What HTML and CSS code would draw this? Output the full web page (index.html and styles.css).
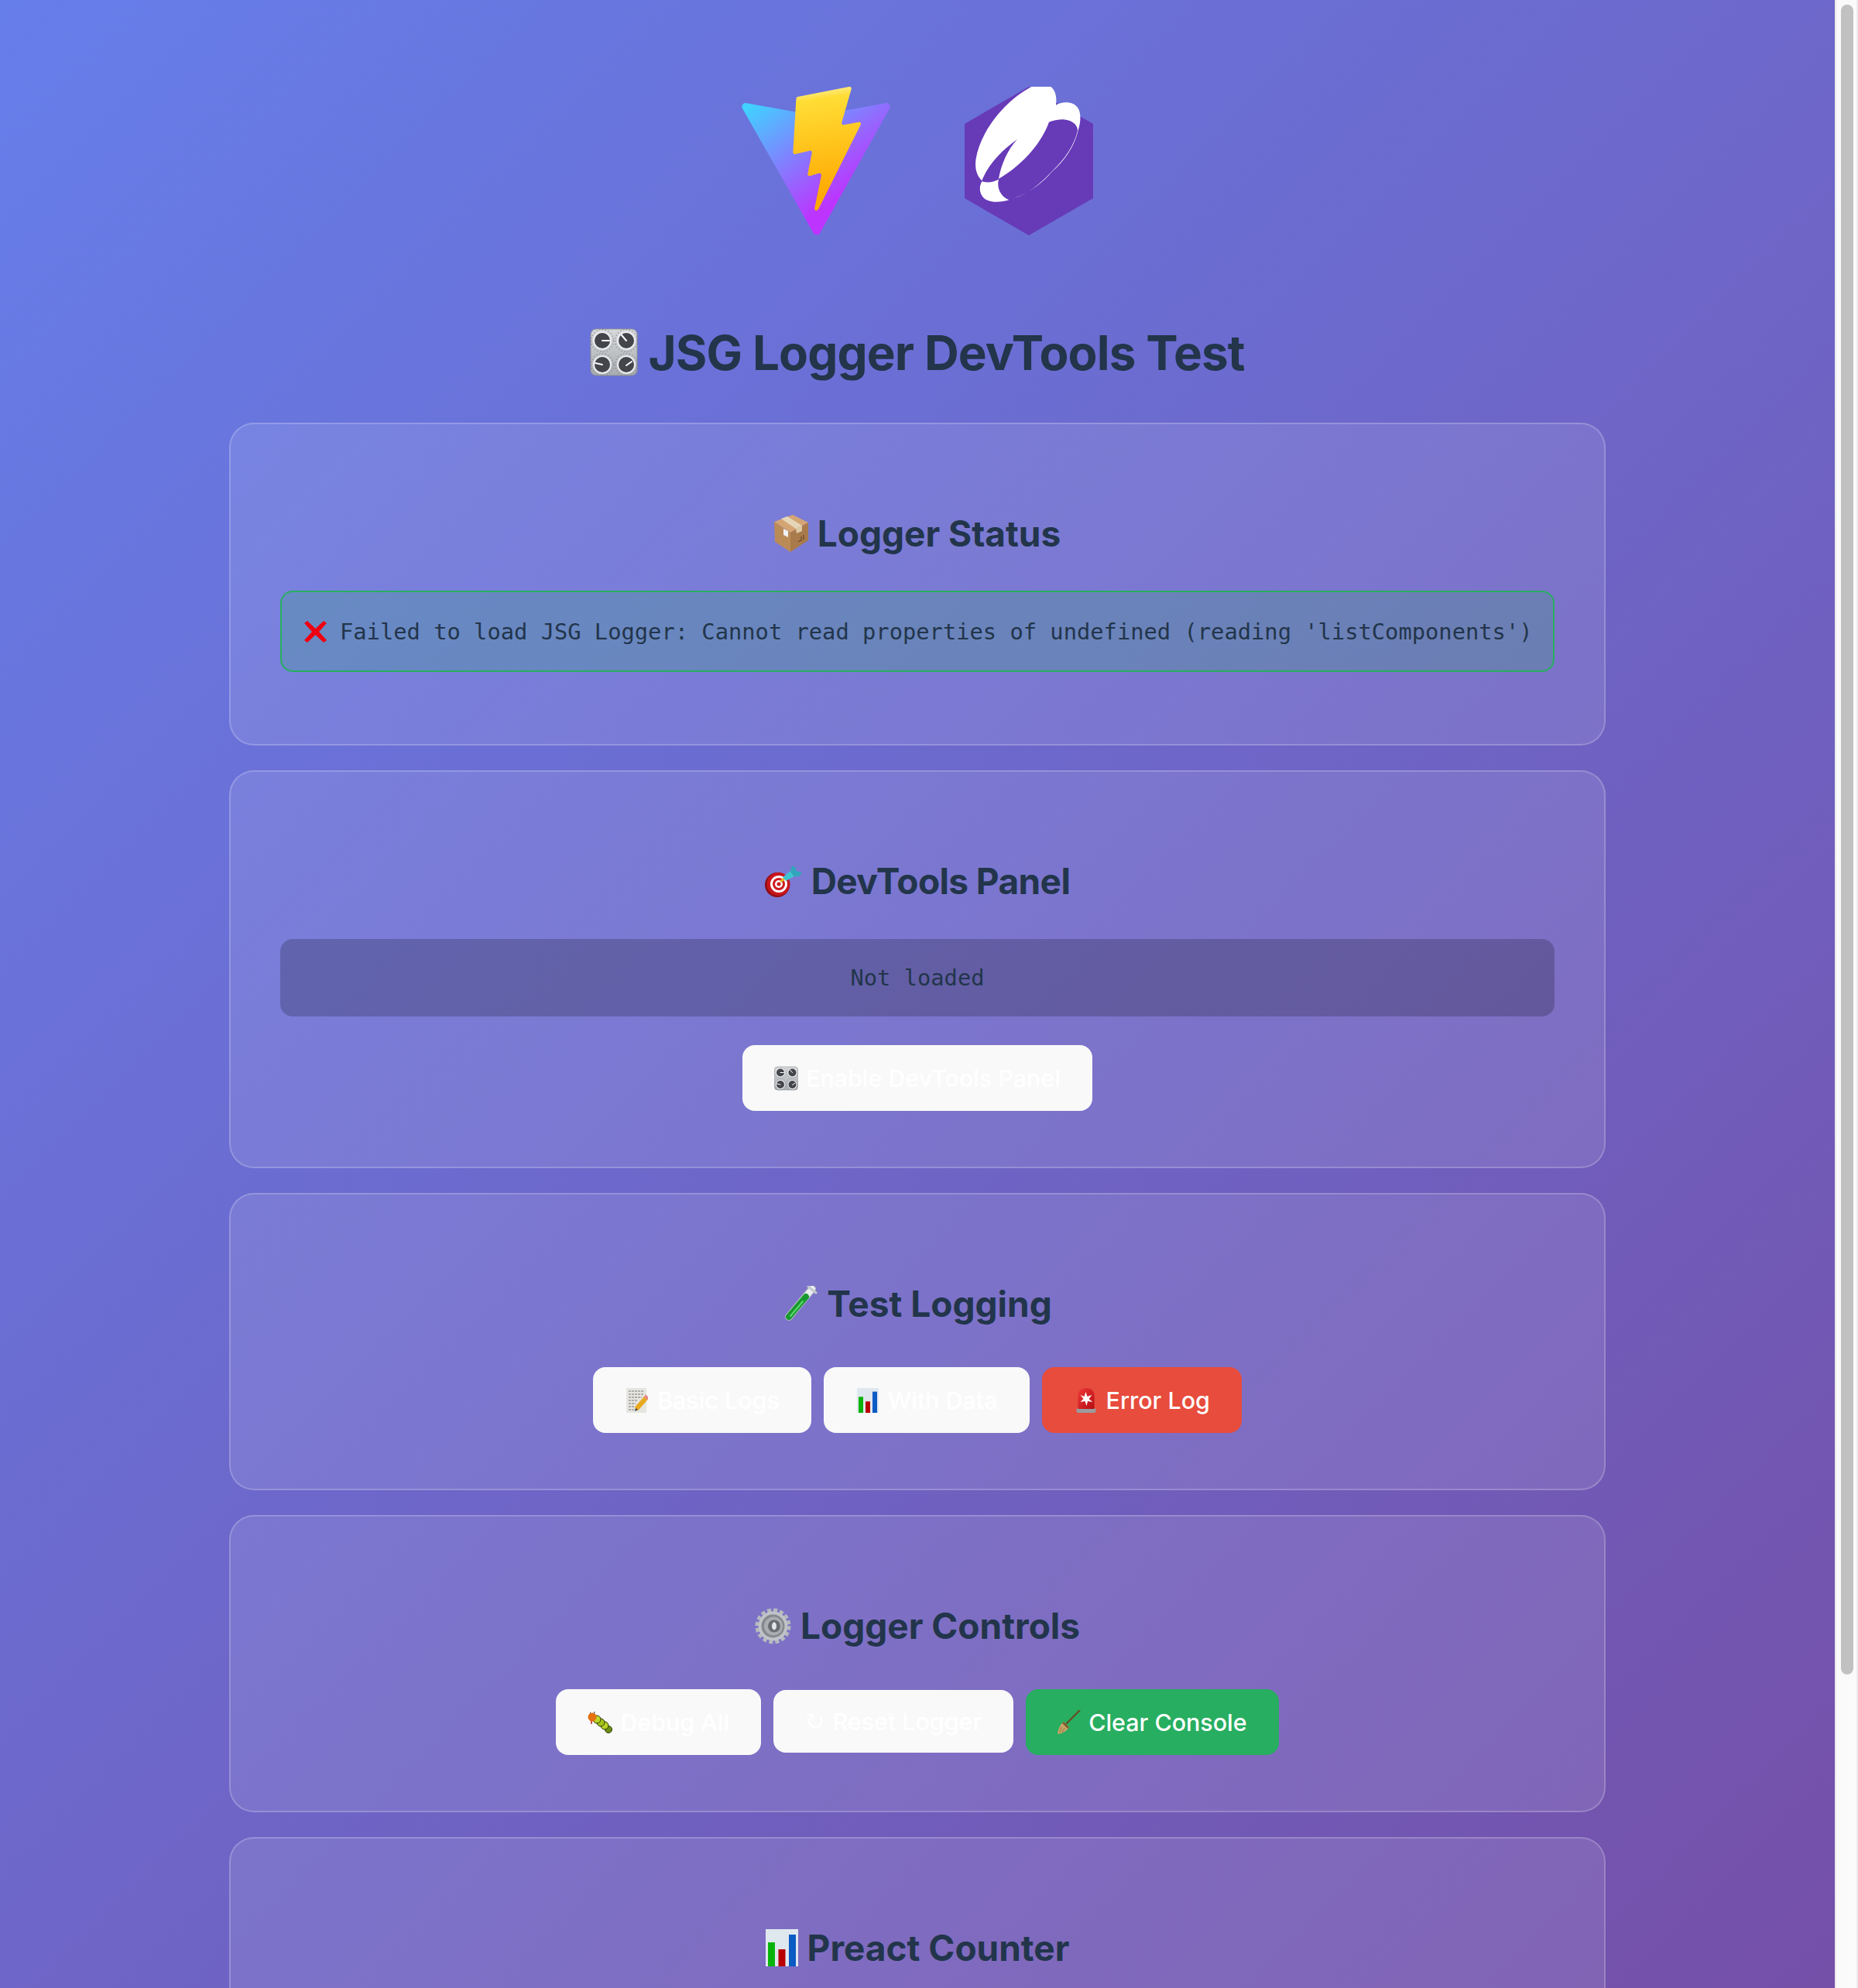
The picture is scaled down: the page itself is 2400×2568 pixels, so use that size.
FILE: index.html
```html
<!DOCTYPE html>
<html lang="en">
<head>
<meta charset="utf-8">
<title>JSG Logger DevTools Test</title>
<link rel="stylesheet" href="styles.css">
</head>
<body>
<svg class="defs" aria-hidden="true">
  <defs>
    <linearGradient id="viteA" x1="-.828%" x2="57.636%" y1="7.652%" y2="78.411%"><stop offset="0" stop-color="#41D1FF"/><stop offset="1" stop-color="#BD34FE"/></linearGradient>
    <linearGradient id="viteB" x1="43.376%" x2="50.316%" y1="2.242%" y2="89.03%"><stop offset="0" stop-color="#FFEA83"/><stop offset=".0833" stop-color="#FFDD35"/><stop offset="1" stop-color="#FFA800"/></linearGradient>
    <linearGradient id="plate" x1="0" y1="0" x2="0" y2="1"><stop offset="0" stop-color="#d6d8da"/><stop offset="1" stop-color="#a8acb0"/></linearGradient>
    <linearGradient id="glass" x1="0" y1="0" x2="1" y2="1"><stop offset="0" stop-color="#f0383a"/><stop offset="1" stop-color="#b30d12"/></linearGradient>
    <symbol id="i-knobs" viewBox="0 0 62 62">
      <rect x="1" y="1" width="60" height="60" rx="7" fill="url(#plate)" stroke="#8b8f93"/>
      <g fill="#eceef0"><circle cx="16" cy="16" r="12"/><circle cx="47" cy="16" r="12"/><circle cx="16" cy="47" r="12"/><circle cx="47" cy="47" r="12"/></g>
      <g fill="#43454b"><circle cx="16" cy="16" r="10"/><circle cx="47" cy="16" r="10"/><circle cx="16" cy="47" r="10"/><circle cx="47" cy="47" r="10"/></g>
      <g stroke="#fff" stroke-width="2" stroke-linecap="round"><path d="M16 16h9"/><path d="M41 9l6 7"/><path d="M7 45l9 2"/><path d="M47 48l7-5"/></g>
      <g fill="none" stroke="#74777b" stroke-width="1.2" stroke-dasharray="1 3"><circle cx="16" cy="16" r="14.5"/><circle cx="47" cy="16" r="14.5"/><circle cx="16" cy="47" r="14.5"/><circle cx="47" cy="47" r="14.5"/></g>
    </symbol>
    <symbol id="i-box" viewBox="0 0 44 48">
      <path d="M0 9 24 0 44 10 21 23z" fill="#d4a473"/>
      <path d="M0 9 21 23V48L1 35z" fill="#bb8b57"/>
      <path d="M21 23 44 10V33L21 48z" fill="#a97a4a"/>
      <path d="M9 5 17 2 36 14 28 18z" fill="#e6d6b8"/>
      <path d="M28 18 36 14V21L29 24z" fill="#dcc9a6"/>
      <path d="M12 18 18 21V29L12 26z" fill="#eef0f2"/>
      <path d="M31 35l3-2M35 28v6M38 26v6" stroke="#6e4c2b" stroke-width="1.3" fill="none"/>
    </symbol>
    <symbol id="i-x" viewBox="0 0 29 28">
      <path d="M0 3 4 0 14.500 10 25 0 29 3 19 14 29 25 25 28 14.500 18 4 28 0 25 10 14z" fill="#ee0010"/>
    </symbol>
    <symbol id="i-target" viewBox="0 0 48 41">
      <circle cx="16" cy="25" r="16" fill="#8f0d12"/>
      <circle cx="17.500" cy="24" r="15" fill="#c8161c"/>
      <circle cx="18" cy="24" r="11" fill="#fff"/>
      <circle cx="18" cy="24" r="8" fill="#cf1a20"/>
      <circle cx="18" cy="24" r="5" fill="#fff"/>
      <circle cx="18" cy="24" r="2.500" fill="#cf1a20"/>
      <path d="M20 21l5-4" stroke="#e6b422" stroke-width="3"/>
      <path d="M23 15 33 7 38 14 27 20z" fill="#3fc4d2"/>
      <path d="M33 8 35 0 40 3 40 7 48 9 44 14 38 14z" fill="#2fa6ba"/>
    </symbol>
    <symbol id="i-tube" viewBox="0 0 45 47">
      <path d="M38 4 8 40" stroke="#aab2b8" stroke-width="10" stroke-linecap="round"/>
      <path d="M38 4 8 40" stroke="#e9eef0" stroke-width="8" stroke-linecap="round"/>
      <path d="M30 14 8 40" stroke="#16992f" stroke-width="8" stroke-linecap="round"/>
      <path d="M26 20 10 39" stroke="#5fd86d" stroke-width="2" stroke-linecap="round"/>
      <path d="M33 1 43 9" stroke="#c3c9ce" stroke-width="3" stroke-linecap="round"/>
    </symbol>
    <symbol id="i-memo" viewBox="0 0 28 32">
      <rect width="26" height="32" fill="#e6e5e0"/>
      <path d="M3 4h19M3 8h19M3 12h17M3 16h12M3 20h9M3 24h7M3 28h7" stroke="#77787a" stroke-width="1.2" stroke-dasharray="3 1"/>
      <path d="M27 11 13 27" stroke="#e8a91e" stroke-width="6"/>
      <path d="M27.500 10.500 25 13.500" stroke="#e58a8a" stroke-width="6"/>
      <path d="M11 30l1-4 3 2z" fill="#3a3a3a"/>
    </symbol>
    <symbol id="i-chart" viewBox="0 0 42 48">
      <rect width="42" height="48" fill="#dfe8ef"/>
      <rect x="3" y="17" width="9" height="31" fill="#08b40c"/>
      <rect x="16.500" y="26" width="9" height="22" fill="#b90000"/>
      <rect x="30" y="7" width="9" height="41" fill="#0a5bc4"/>
    </symbol>
    <symbol id="i-alarm" viewBox="0 0 27 32">
      <rect x="1" y="26" width="25" height="6" rx="2" fill="#9a9c9e"/>
      <path d="M3 27V10C3 3 8 0 13.500 0S24 3 24 10V27z" fill="url(#glass)"/>
      <path d="M13 5 15 11 21 9 17 14 22 18 15.500 17 14 23 12 17 6 18 10 14 6 9 11 11z" fill="#fff"/>
    </symbol>
    <symbol id="i-gear" viewBox="0 0 47 47">
      <circle cx="23.500" cy="23.500" r="20.500" fill="none" stroke="#b6babe" stroke-width="5" stroke-dasharray="5 3.050"/>
      <circle cx="23.500" cy="23.500" r="19" fill="#bfc3c7"/>
      <circle cx="23.500" cy="23.500" r="15" fill="#85888c"/>
      <circle cx="24" cy="23.500" r="12" fill="#a9adb1"/>
      <circle cx="25" cy="23.500" r="8" fill="#6a6d71"/>
      <ellipse cx="25" cy="23.500" rx="3" ry="5" fill="#e3e6e8"/>
    </symbol>
    <symbol id="i-bug" viewBox="0 0 32 28">
      <path d="M3 1 6 4M9 0 8 4" stroke="#222" stroke-width="1"/>
      <circle cx="27" cy="23" r="4.500" fill="#6d8f14" stroke="#2c3a08"/>
      <circle cx="22" cy="18" r="5" fill="#b7d224" stroke="#2c3a08"/>
      <circle cx="17" cy="14" r="5" fill="#a3c21c" stroke="#2c3a08"/>
      <circle cx="12" cy="10" r="5" fill="#bfd628" stroke="#2c3a08"/>
      <circle cx="6" cy="7" r="5.500" fill="#e5710f"/>
      <path d="M5 12v4" stroke="#b5261a" stroke-width="1.500"/>
    </symbol>
    <symbol id="i-broom" viewBox="0 0 30 31">
      <path d="M29 0 11 18" stroke="#6b4423" stroke-width="2"/>
      <path d="M8 15 15 22C12 27 7 30 0 31 1 24 3 19 8 15z" fill="#c8a468"/>
      <path d="M7 16 14 23" stroke="#7b5a2c" stroke-width="2.500"/>
      <path d="M5 22 3 29M9 23 6 29" stroke="#96773f" stroke-width="1"/>
    </symbol>
  </defs>
</svg>
<main class="page">
  <div class="logos">
    <svg class="logo logo-vite" viewBox="0 0 256 257" role="img" aria-label="Vite logo">
      <path fill="url(#viteA)" d="M255.153 37.938L134.897 252.976c-2.483 4.44-8.862 4.466-11.382.048L.875 37.958c-2.746-4.814 1.371-10.646 6.827-9.67l120.385 21.517a6.537 6.537 0 0 0 2.322-.004l117.867-21.483c5.438-.991 9.574 4.796 6.877 9.62Z"/>
      <path fill="url(#viteB)" d="M185.432.063L96.44 17.501a3.268 3.268 0 0 0-2.634 3.014l-5.474 92.456a3.268 3.268 0 0 0 3.997 3.378l24.777-5.718c2.318-.535 4.413 1.507 3.936 3.838l-7.361 36.047c-.495 2.426 1.782 4.5 4.151 3.78l15.304-4.649c2.372-.72 4.652 1.36 4.15 3.788l-11.698 56.621c-.732 3.542 3.979 5.473 5.943 2.437l1.313-2.028l72.516-144.72c1.215-2.423-.88-5.186-3.54-4.672l-25.505 4.922c-2.396.462-4.435-1.77-3.759-4.114l16.646-57.705c.677-2.35-1.37-4.583-3.769-4.113Z"/>
    </svg>
    <svg class="logo logo-preact" viewBox="18 21 498 576" role="img" aria-label="Preact logo">
      <path fill="#673AB8" d="M267 21 516 165V453L267 597 18 453V165z"/>
      <path fill="#fff" d="M278 21H352C370 35 376 60 372 92C395 78 440 75 458 105C470 125 468 160 458 190C445 250 405 310 355 352C320 395 260 440 190 459C250 445 310 400 355 350C405 305 445 245 456 190C455 165 430 150 400 148C380 148 360 152 345 158C320 230 250 320 150 378C160 320 185 265 222 225C165 265 110 320 85 385C70 370 55 345 62 300C80 190 180 70 278 21Z"/>
      <path fill="#fff" d="M85 388C110 395 130 390 150 380C142 410 155 445 190 460C160 470 120 470 100 458C78 445 70 415 85 388Z"/>
    </svg>
  </div>
  <h1 class="title"><svg class="icon icon-title"><use href="#i-knobs"/></svg><span>JSG Logger DevTools Test</span></h1>

  <section class="card">
    <h2 class="heading"><svg class="icon icon-box"><use href="#i-box"/></svg><span>Logger Status</span></h2>
    <div class="status"><svg class="icon icon-x"><use href="#i-x"/></svg><span>Failed to load JSG Logger: Cannot read properties of undefined (reading 'listComponents')</span></div>
  </section>

  <section class="card">
    <h2 class="heading heading-tight"><svg class="icon icon-target"><use href="#i-target"/></svg><span>DevTools Panel</span></h2>
    <div class="panel-state">Not loaded</div>
    <div class="actions">
      <button class="btn"><svg class="icon icon-btn"><use href="#i-knobs"/></svg>Enable DevTools Panel</button>
    </div>
  </section>

  <section class="card">
    <h2 class="heading"><svg class="icon icon-tube"><use href="#i-tube"/></svg><span>Test Logging</span></h2>
    <div class="actions">
      <button class="btn"><svg class="icon icon-memo"><use href="#i-memo"/></svg>Basic Logs</button>
      <button class="btn"><svg class="icon icon-memo"><use href="#i-chart"/></svg>With Data</button>
      <button class="btn btn-danger"><svg class="icon icon-memo"><use href="#i-alarm"/></svg>Error Log</button>
    </div>
  </section>

  <section class="card">
    <h2 class="heading"><svg class="icon icon-gear"><use href="#i-gear"/></svg><span>Logger Controls</span></h2>
    <div class="actions">
      <button class="btn"><svg class="icon icon-bug"><use href="#i-bug"/></svg>Debug All</button>
      <button class="btn btn-short"><span class="glyph">↻</span>Reset Logger</button>
      <button class="btn btn-success"><svg class="icon icon-broom"><use href="#i-broom"/></svg>Clear Console</button>
    </div>
  </section>

  <section class="card">
    <h2 class="heading"><svg class="icon icon-chart"><use href="#i-chart"/></svg><span>Preact Counter</span></h2>
  </section>
</main>
<aside class="scrollbar" aria-hidden="true"><div class="thumb"></div></aside>
</body>
</html>
```
FILE: styles.css
```css
* { box-sizing: border-box; }
html, body { margin: 0; height: 2568px; overflow: hidden; }
body {
  display: flex;
  font-family: Inter, "Liberation Sans", sans-serif;
  color: #22354b;
}
.defs { width: 0; height: 0; flex: none; }
.page {
  flex: 1;
  min-width: 0;
  height: 2568px;
  overflow: hidden;
  padding: 64px 296px 0;
  background: linear-gradient(135deg, #667eea 0%, #764ba2 100%) no-repeat;
  background-size: 100% 3050px;
}
.scrollbar {
  flex: none;
  width: 30px;
  padding: 6px 6px 0 8px;
  background: #fafafa;
  border-left: 2px solid #ebebeb;
  border-right: 2px solid #ebebeb;
}
.thumb { width: 16px; height: 2157px; margin-left: -2px; border-radius: 8px; background: #c1c1c1; }
.logos { display: flex; justify-content: center; }
.logo { display: block; box-sizing: content-box; padding: 48px; height: 192px; }
.logo-vite { width: 192px; }
.logo-preact { width: 166px; }
.title {
  display: flex;
  justify-content: center;
  align-items: center;
  gap: 13px;
  margin: 66px 0 52px;
  font-size: 62px;
  letter-spacing: -.9px;
  line-height: 76px;
  font-weight: 700;
}
.icon { display: block; flex: none; }
.icon-title { width: 62px; height: 62px; margin-bottom: 3px; }
.card {
  padding: 64px;
  margin-bottom: 32px;
  background: rgba(255, 255, 255, .1);
  border: 2px solid rgba(255, 255, 255, .2);
  border-radius: 32px;
}
.heading {
  display: flex;
  justify-content: center;
  align-items: center;
  gap: 12px;
  margin: 41px 0 38px;
  font-size: 46px;
  line-height: 72px;
  font-weight: 700;
}
.heading-tight { letter-spacing: -.6px; }
.icon-box { width: 44px; height: 48px; }
.icon-target { width: 48px; height: 41px; }
.icon-tube { width: 45px; height: 47px; }
.icon-gear { width: 47px; height: 47px; }
.icon-chart { width: 42px; height: 48px; }
.status, .panel-state {
  font-family: "DejaVu Sans Mono", monospace;
  font-size: 28.75px;
  border-radius: 16px;
}
.status {
  display: flex;
  align-items: center;
  gap: 17px;
  height: 105px;
  margin: 0 0 29px;
  padding: 0 28px 0 29px;
  white-space: nowrap;
  background: rgba(39, 174, 96, .2);
  border: 2px solid #27ae60;
}
.icon-x { width: 29px; height: 28px; }
.panel-state {
  height: 100px;
  line-height: 100px;
  margin: 39px 0 29px;
  text-align: center;
  background: rgba(0, 0, 0, .2);
}
.actions { display: flex; justify-content: center; align-items: flex-start; flex-wrap: wrap; }
.btn {
  display: flex;
  align-items: center;
  gap: 10px;
  height: 85px;
  margin: 8px;
  padding: 0 41px;
  font-family: inherit;
  font-size: 30.4px;
  font-weight: 500;
  color: #fff;
  background: #f9f9f9;
  border: 0;
  border-radius: 16px;
}
.btn-short { height: 81px; margin-top: 9px; }
.btn-danger { background: #e74c3c; }
.btn-success { background: #27ae60; }
.icon-btn { width: 31px; height: 32px; }
.icon-memo { width: 28px; height: 32px; margin: 0 2px; }
.icon-bug { width: 32px; height: 28px; }
.icon-broom { width: 30px; height: 31px; }
.glyph { font-family: "DejaVu Sans", sans-serif; }
```
